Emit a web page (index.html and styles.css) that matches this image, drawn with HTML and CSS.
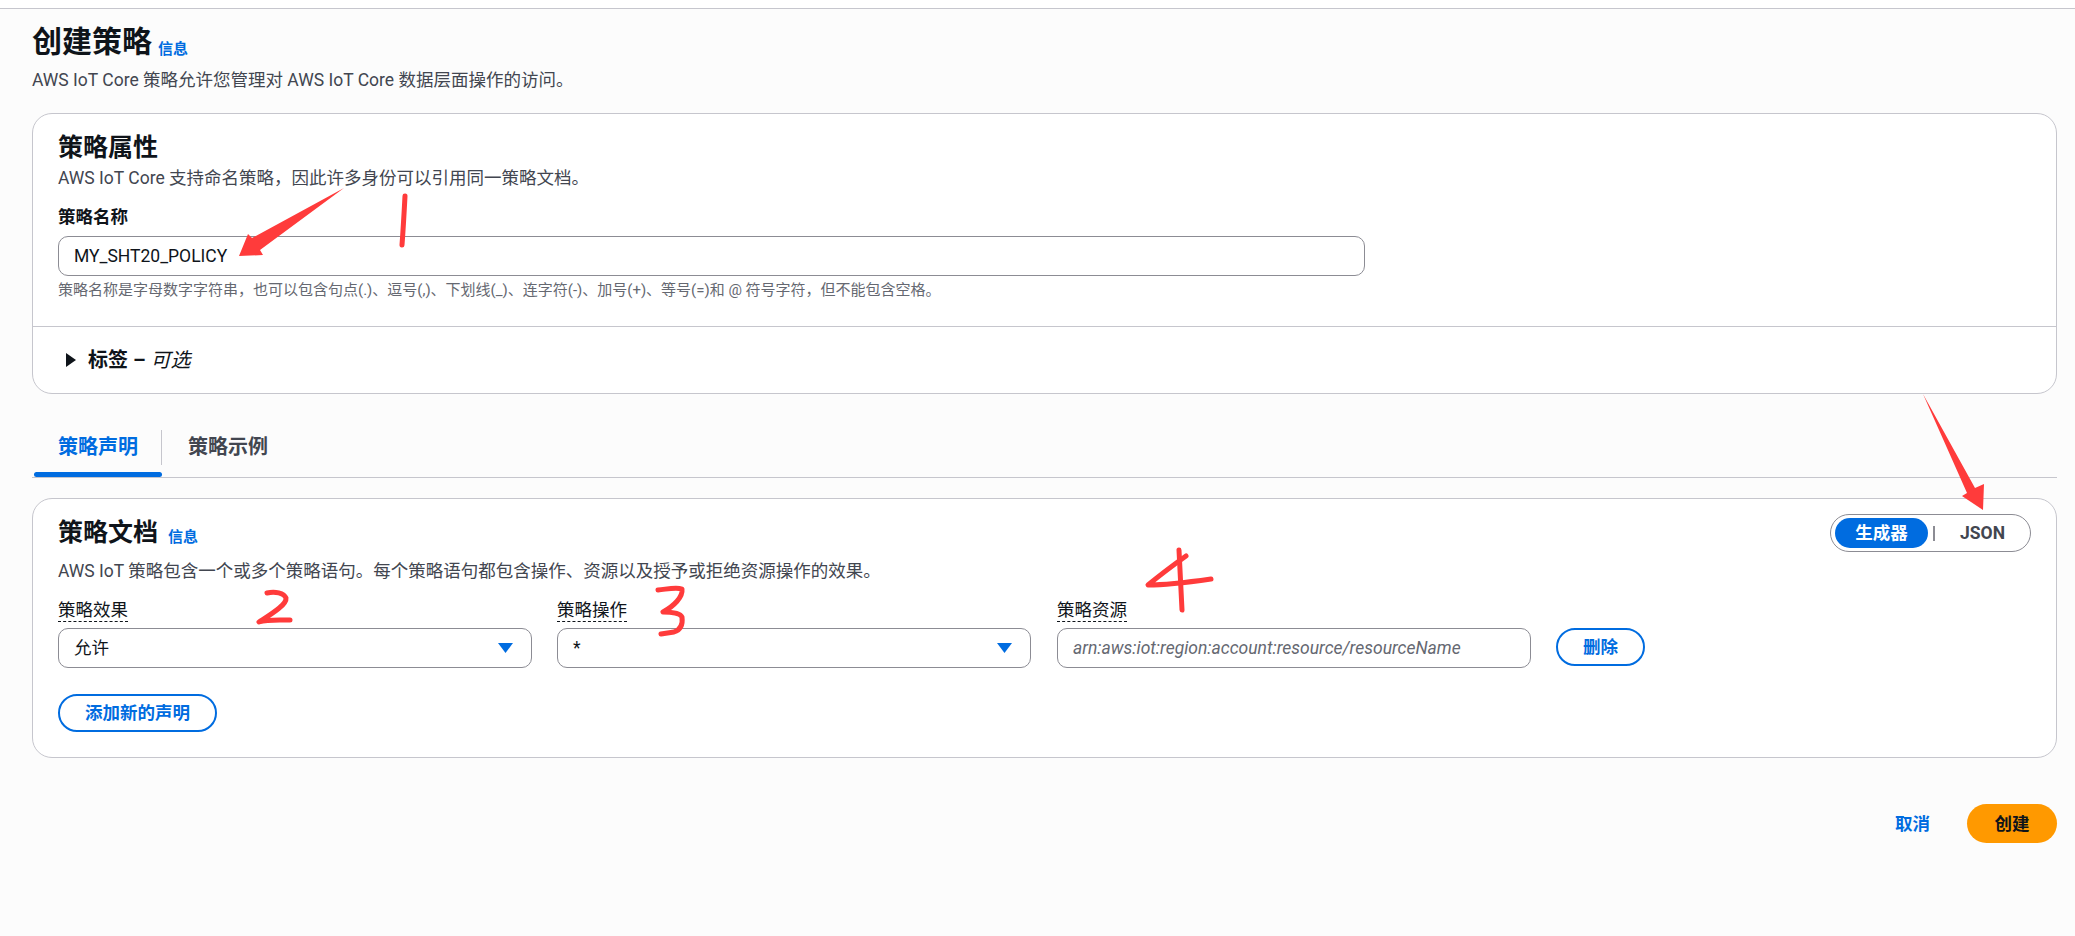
FILE: index.html
```html
<!DOCTYPE html>
<html lang="zh-CN">
<head>
<meta charset="utf-8">
<title>创建策略</title>
<link rel="stylesheet" href="styles.css">
</head>
<body>
<div class="topbar"></div>
<main class="page">
  <header class="page-head">
    <div class="title-row"><h1>创建策略</h1><a class="info info-title">信息</a></div>
    <p class="lead">AWS IoT Core 策略允许您管理对 AWS IoT Core 数据层面操作的访问。</p>
  </header>

  <section class="card">
    <div class="card-body">
      <h2>策略属性</h2>
      <p class="desc">AWS IoT Core 支持命名策略，因此许多身份可以引用同一策略文档。</p>
      <label class="label">策略名称</label>
      <input class="control name-input" type="text" value="MY_SHT20_POLICY">
      <p class="hint">策略名称是字母数字字符串，也可以包含句点(.)、逗号(,)、下划线(_)、连字符(-)、加号(+)、等号(=)和 @ 符号字符，但不能包含空格。</p>
    </div>
    <div class="tags-row">
      <svg class="caret" width="10" height="14" viewBox="0 0 10 14"><path d="M0 0 L10 7 L0 14 Z"/></svg>
      <span class="tags-label">标签 – <em>可选</em></span>
    </div>
  </section>

  <nav class="tabs">
    <a class="tab tab-active">策略声明</a>
    <a class="tab">策略示例</a>
  </nav>

  <section class="card card-doc">
    <div class="doc-head">
      <div class="doc-title"><h2>策略文档</h2><a class="info info-doc">信息</a></div>
      <div class="toggle">
        <span class="toggle-on">生成器</span>
        <span class="toggle-sep"></span>
        <span class="toggle-off">JSON</span>
      </div>
    </div>
    <p class="desc">AWS IoT 策略包含一个或多个策略语句。每个策略语句都包含操作、资源以及授予或拒绝资源操作的效果。</p>
    <div class="statement">
      <div class="field">
        <span class="label-dashed">策略效果</span>
        <div class="control select"><span>允许</span><svg class="arrow" width="15" height="10" viewBox="0 0 15 10"><path d="M0 0 H15 L7.5 10 Z"/></svg></div>
      </div>
      <div class="field">
        <span class="label-dashed">策略操作</span>
        <div class="control select"><span>*</span><svg class="arrow" width="15" height="10" viewBox="0 0 15 10"><path d="M0 0 H15 L7.5 10 Z"/></svg></div>
      </div>
      <div class="field">
        <span class="label-dashed">策略资源</span>
        <input class="control resource" type="text" placeholder="arn:aws:iot:region:account:resource/resourceName">
      </div>
      <button class="btn btn-delete">删除</button>
    </div>
    <button class="btn btn-add">添加新的声明</button>
  </section>

  <footer class="actions">
    <a class="cancel">取消</a>
    <button class="btn-primary">创建</button>
  </footer>
</main>

<svg class="marks" width="2075" height="936" viewBox="0 0 2075 936">
  <path class="mark-fill" d="M344 188 L252 238 L248 234 L239 256 L263 255 L260 250 Z"/>
  <path class="mark-fill" d="M1923 394 L1967 493 L1962 496 L1983 510 L1984 484 L1975 488 Z"/>
  <path class="mark-line" d="M405 196 C404 215 403 232 402 245"/>
  <path class="mark-line" d="M267 593 C275 591 284 593 286 598 C287 605 270 615 259 622 C268 619 280 620 290 620"/>
  <path class="mark-line" d="M658 590 C668 589 676 587 682 589 C683 597 674 606 663 612 C672 612 680 613 682 617 C683 625 680 630 674 632 L661 634"/>
  <path class="mark-line" d="M1179 550 C1180 570 1181 590 1182 610"/>
  <path class="mark-line" d="M1186 556 C1172 566 1160 575 1148 585 C1168 585 1190 582 1211 579"/>
</svg>
</body>
</html>
```
FILE: styles.css
```css
* { box-sizing: border-box; }
html, body { margin: 0; padding: 0; }
body {
  background: #fcfcfc;
  color: #0f141a;
  font-family: Roboto, "Noto Sans CJK SC", sans-serif;
  font-size: 17.5px;
  line-height: 24px;
  height: 936px;
  overflow: hidden;
  position: relative;
}
h1, h2, p { margin: 0; }
.topbar { height: 9px; background: #fff; border-bottom: 1px solid #c6c6cd; }
.page { padding: 15px 18px 0 32px; }
.title-row { display: flex; align-items: flex-end; height: 36px; }
h1 { font-size: 30px; line-height: 36px; font-weight: 700; }
.info { color: #006ce0; font-size: 15px; font-weight: 700; line-height: 20px; }
.info-title { margin-left: 6px; margin-bottom: 1px; }
.lead { margin-top: 8px; color: #424650; }
.card {
  background: #fff;
  border: 1px solid #c6c6cd;
  border-radius: 20px;
  margin-top: 21px;
}
.card-body { padding: 19px 25px 26px; border-bottom: 1px solid #c6c6cd; }
h2 { font-size: 25px; line-height: 30px; font-weight: 700; }
.desc { margin-top: 3px; color: #424650; }
.label { display: block; margin-top: 15px; font-weight: 700; }
.control {
  display: block;
  height: 40px;
  border: 1px solid #8c8c94;
  border-radius: 10px;
  background: #fff;
  font: inherit;
  color: #0f141a;
  padding: 0 15px;
}
.name-input { margin-top: 7px; width: 1307px; }
.hint { margin-top: 4px; font-size: 15px; line-height: 20px; color: #656871; }
.tags-row { display: flex; align-items: center; height: 66px; padding-left: 33px; }
.caret { fill: #0f141a; margin-right: 12px; }
.tags-label { font-size: 20px; font-weight: 700; }
.tags-label em { font-weight: 400; }
.tabs { display: flex; margin-top: 36px; height: 48px; border-bottom: 1px solid #c6c6cd; padding-left: 2px; }
.tab {
  position: relative;
  height: 47px;
  padding: 5px 24px 0;
  line-height: 24px;
  width: 128px;
  font-size: 20px;
  font-weight: 700;
  color: #424650;
}
.tab + .tab { padding-left: 26px; width: auto; }
.tab-active { color: #006ce0; }
.tab-active::before {
  content: "";
  position: absolute;
  right: 0; top: 0;
  height: 35px;
  border-right: 1px solid #c6c6cd;
}
.tab-active::after {
  content: "";
  position: absolute;
  left: 0; right: 0; bottom: 0;
  height: 5px;
  background: #006ce0;
  border-radius: 3px;
}
.card-doc { margin-top: 20px; padding: 15px 25px 25px; }
.doc-head { display: flex; justify-content: space-between; align-items: center; }
.doc-title { display: flex; align-items: flex-end; }
.info-doc { margin-left: 10px; margin-bottom: 1px; }
.card-doc .desc { margin-top: 7px; }
.toggle {
  display: flex;
  align-items: center;
  width: 201px;
  height: 38px;
  padding: 0 4px;
  border: 1px solid #8c8c94;
  border-radius: 19px;
}
.toggle-on {
  width: 93px;
  height: 30px;
  line-height: 30px;
  text-align: center;
  color: #fff;
  background: #006ce0;
  border-radius: 15px;
  font-weight: 700;
}
.toggle-sep { width: 2px; height: 15px; background: #8c8c94; margin-left: 5px; }
.toggle-off { flex: 1; text-align: center; font-weight: 700; color: #424650; padding-left: 4px; }
.statement { display: flex; align-items: flex-end; margin-top: 15px; }
.field { width: 474px; margin-right: 25px; }
.field:nth-child(2) { margin-right: 26px; }
.label-dashed {
  display: inline-block;
  height: 23px;
  line-height: 22px;
  border-bottom: 1px dashed #0f141a;
}
.select { display: flex; align-items: center; justify-content: space-between; margin-top: 6px; padding-right: 18px; }
.arrow { fill: #006ce0; }
.resource { width: 100%; margin-top: 6px; }
.resource::placeholder { color: #656871; font-style: italic; opacity: 1; }
.btn {
  display: block;
  height: 38px;
  padding: 0 24px;
  background: #fff;
  border: 2px solid #006ce0;
  border-radius: 20px;
  color: #006ce0;
  font: inherit;
  font-weight: 700;
}
.btn-delete { width: 89px; margin-bottom: 2px; padding: 0; }
.btn-add { margin-top: 26px; width: 159px; padding: 0; }
.actions { display: flex; justify-content: flex-end; align-items: center; margin-top: 46px; }
.cancel { color: #006ce0; font-weight: 700; margin-right: 37px; }
.btn-primary {
  width: 90px;
  height: 39px;
  border: 0;
  border-radius: 20px;
  background: #ff9900;
  color: #0f141a;
  font: inherit;
  font-weight: 700;
}
.marks { position: absolute; left: 0; top: 0; pointer-events: none; }
.mark-fill { fill: #ff3b3b; }
.mark-line { fill: none; stroke: #ff3b3b; stroke-width: 5; stroke-linecap: round; stroke-linejoin: round; }
```
